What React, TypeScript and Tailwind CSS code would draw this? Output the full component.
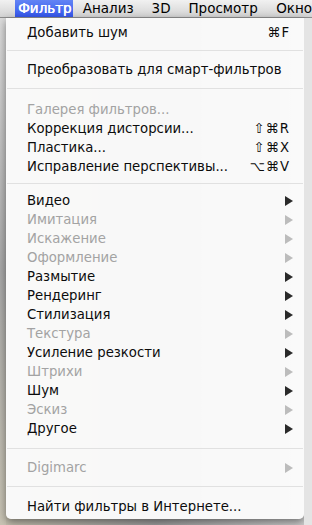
import React from "react";

type Item =
  | { kind: "row"; label: string; disabled?: boolean; shortcut?: string; sub?: boolean }
  | { kind: "sep"; h: string; top: string };

const items: Item[] = [
  { kind: "row", label: "Добавить шум", shortcut: "⌘F" },
  { kind: "sep", h: "h-[18px]", top: "pt-[8px]" },
  { kind: "row", label: "Преобразовать для смарт-фильтров" },
  { kind: "sep", h: "h-[21px]", top: "pt-[9px]" },
  { kind: "row", label: "Галерея фильтров...", disabled: true },
  { kind: "row", label: "Коррекция дисторсии...", shortcut: "⇧⌘R" },
  { kind: "row", label: "Пластика...", shortcut: "⇧⌘X" },
  { kind: "row", label: "Исправление перспективы...", shortcut: "⌥⌘V" },
  { kind: "sep", h: "h-[15px]", top: "pt-[7px]" },
  { kind: "row", label: "Видео", sub: true },
  { kind: "row", label: "Имитация", sub: true, disabled: true },
  { kind: "row", label: "Искажение", sub: true, disabled: true },
  { kind: "row", label: "Оформление", sub: true, disabled: true },
  { kind: "row", label: "Размытие", sub: true },
  { kind: "row", label: "Рендеринг", sub: true },
  { kind: "row", label: "Стилизация", sub: true },
  { kind: "row", label: "Текстура", sub: true, disabled: true },
  { kind: "row", label: "Усиление резкости", sub: true },
  { kind: "row", label: "Штрихи", sub: true, disabled: true },
  { kind: "row", label: "Шум", sub: true },
  { kind: "row", label: "Эскиз", sub: true, disabled: true },
  { kind: "row", label: "Другое", sub: true },
  { kind: "sep", h: "h-[20px]", top: "pt-[10px]" },
  { kind: "row", label: "Digimarc", sub: true, disabled: true },
  { kind: "sep", h: "h-[20px]", top: "pt-[9px]" },
  { kind: "row", label: "Найти фильтры в Интернете..." },
];

function Arrow({ disabled }: { disabled?: boolean }) {
  return (
    <svg width="8" height="10" viewBox="0 0 8 10" className="shrink-0">
      <polygon points="0,0 8,5 0,10" fill={disabled ? "#bcbcbc" : "#2a2a2a"} />
    </svg>
  );
}

function MenuRow({ item }: { item: Extract<Item, { kind: "row" }> }) {
  return (
    <div
      className={`h-[19px] flex items-center pl-[21px] ${item.sub ? "pr-[11px]" : "pr-[14px]"} ${
        item.disabled ? "text-[#a3a3a3]" : "text-[#0c0c0c]"
      }`}
    >
      <span className="flex-1 leading-[19px] whitespace-nowrap">{item.label}</span>
      {item.shortcut && <span className="leading-[19px] tracking-[1px]">{item.shortcut}</span>}
      {item.sub && <Arrow disabled={item.disabled} />}
    </div>
  );
}

export default function App() {
  return (
    <div className="w-[312px] h-[525px] overflow-hidden flex flex-col bg-gradient-to-r from-[#c4bfae] via-[#9c9c9c] to-[#cfcfcf] font-['DejaVu_Sans',sans-serif] text-[13.25px]">
      {/* menu bar */}
      <div className="h-[18px] shrink-0 flex bg-gradient-to-b from-[#f1f1f1] to-[#d3d3d3] border-b border-[#8e8e8e] text-black text-[13.5px] whitespace-nowrap">
        <div className="ml-[15px] w-[58px] h-[17px] flex items-center pl-[3px] bg-gradient-to-b from-[#6284f5] to-[#3555eb] text-white [text-shadow:0.5px_0_0_#fff]">
          Фильтр
        </div>
        <div className="w-[69px] flex items-center pl-[10px]">Анализ</div>
        <div className="w-[37px] flex items-center pl-[10px]">3D</div>
        <div className="w-[88px] flex items-center pl-[10px]">Просмотр</div>
        <div className="flex items-center pl-[10px]">Окно</div>
      </div>

      <div className="flex flex-1">
        {/* window behind, left edge */}
        <div className="w-[6px] bg-gradient-to-b from-[#dcdcdc] via-[#a9a9a9] to-[#c9c4b4]" />

        {/* dropdown */}
        <div className="w-[298px] h-[501px] pt-[5px] pb-[3px] bg-[#fbfbfb]/[0.97] rounded-b-[5px] shadow-[0_3px_8px_rgba(0,0,0,0.45)]">
          {items.map((it, i) =>
            it.kind === "sep" ? (
              <div key={i} className={`${it.h} ${it.top}`}>
                <div className="h-px mx-px bg-[#e1e1e1]" />
              </div>
            ) : (
              <MenuRow key={i} item={it} />
            )
          )}
        </div>

        <div className="flex-1 bg-[#e4e4e4]" />
      </div>
    </div>
  );
}
